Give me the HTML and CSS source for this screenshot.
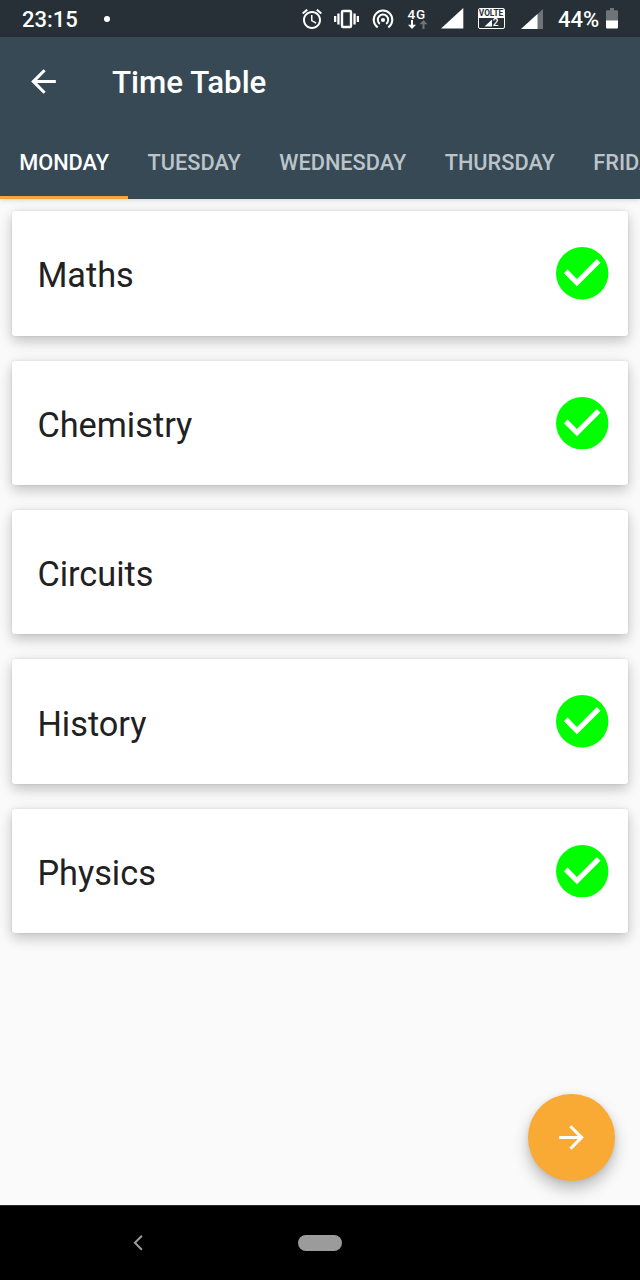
FILE: index.html
```html
<!DOCTYPE html>
<html lang="en">
<head>
<meta charset="utf-8">
<title>Time Table</title>
<link rel="stylesheet" href="styles.css">
</head>
<body>
<div class="screen">
  <div class="status">
    <span class="time">23:15</span>
    <span class="dot"></span>
    <div class="status-icons">
      <svg class="alarm" width="20" height="20" viewBox="2 2 20 20"><path fill="#fff" d="M22 5.720l-4.600-3.860-1.290 1.530 4.600 3.860L22 5.720zM7.880 3.390L6.600 1.860 2 5.710l1.290 1.530 4.590-3.850zM12.500 8H11v6l4.750 2.850.75-1.230-4-2.370V8zM12 4c-4.970 0-9 4.030-9 9s4.020 9 9 9c4.970 0 9-4.030 9-9s-4.030-9-9-9zm0 16c-3.870 0-7-3.130-7-7s3.130-7 7-7 7 3.130 7 7-3.130 7-7 7z"/></svg>
      <svg class="vibrate" width="25" height="20" viewBox="0 0 25 20"><path fill="#fff" d="M0 7h2.300v6H0zM3.300 4.500h2.300v11h-2.300zM19.400 4.500h2.300v11h-2.300zM22.700 7h2.300v6h-2.300z"/><rect x="8" y="2" width="9" height="16" fill="none" stroke="#fff" stroke-width="2.400" rx="1"/></svg>
      <svg class="hotspot" width="22" height="20" viewBox="0 0 22 20"><g fill="none" stroke="#fff" stroke-width="2"><path d="M5.700 18.400A9.300 9.300 0 1 1 16.300 18.400"/><path d="M7.900 14.900A5.200 5.200 0 1 1 14.100 14.900"/></g><circle cx="11" cy="11" r="2.100" fill="#fff"/></svg>
      <div class="network">
        <span>4G</span>
        <svg width="20" height="9" viewBox="0 0 20 9"><path fill="#fff" d="M3 0h2v4.800h3L4 9 0 4.800h3z"/><path fill="#6e7477" d="M14.500 9h2V4.200h3L15.500 0l-4 4.200h3z"/></svg>
      </div>
      <svg class="signal-one" width="23" height="21" viewBox="0 0 23 21"><path fill="#fff" d="M22.300 0v20.500H0z"/></svg>
      <div class="volte">
        <span class="volte-name">VOLTE</span>
        <span class="volte-sim"><svg width="8" height="8" viewBox="0 0 8 8"><path fill="#fff" d="M8 0.500v7H0.500z"/></svg>2</span>
      </div>
      <svg class="signal-two" width="22" height="20" viewBox="0 0 22 20"><path fill="#6e7477" d="M22 0v20H0z"/><path fill="#fff" d="M16.500 5v15H0z"/></svg>
      <span class="percent">44%</span>
      <svg class="battery" width="12" height="21" viewBox="0 0 12 21"><path fill="#6e7477" d="M4 0h4v2.200h3q1 0 1 1V13H0V3.200q0-1 1-1h3z"/><path fill="#fff" d="M0 12.500h12V19.500q0 1-1 1H1q-1 0-1-1z"/></svg>
    </div>
  </div>
  <header class="appbar">
    <div class="titlebar">
      <svg width="37" height="37" viewBox="0 0 24 24"><path fill="#fff" d="M20 11H7.830l5.590-5.590L12 4l-8 8 8 8 1.410-1.410L7.830 13H20v-2z"/></svg>
      <h1 class="title">Time Table</h1>
    </div>
    <nav class="tabs">
      <span class="tab active">MONDAY</span>
      <span class="tab">TUESDAY</span>
      <span class="tab">WEDNESDAY</span>
      <span class="tab">THURSDAY</span>
      <span class="tab">FRIDAY</span>
    </nav>
  </header>
  <main class="list">
    <div class="card"><span>Maths</span><svg class="check" viewBox="2 2 20 20"><circle cx="12" cy="12" r="10" fill="#0f0"/><path fill="#fff" d="M10 17l-5-5 1.410-1.410L10 14.170l7.590-7.590L19 8l-9 9z"/></svg></div>
    <div class="card"><span>Chemistry</span><svg class="check" viewBox="2 2 20 20"><circle cx="12" cy="12" r="10" fill="#0f0"/><path fill="#fff" d="M10 17l-5-5 1.410-1.410L10 14.170l7.590-7.590L19 8l-9 9z"/></svg></div>
    <div class="card"><span>Circuits</span></div>
    <div class="card"><span>History</span><svg class="check" viewBox="2 2 20 20"><circle cx="12" cy="12" r="10" fill="#0f0"/><path fill="#fff" d="M10 17l-5-5 1.410-1.410L10 14.170l7.590-7.590L19 8l-9 9z"/></svg></div>
    <div class="card"><span>Physics</span><svg class="check" viewBox="2 2 20 20"><circle cx="12" cy="12" r="10" fill="#0f0"/><path fill="#fff" d="M10 17l-5-5 1.410-1.410L10 14.170l7.590-7.590L19 8l-9 9z"/></svg></div>
    <div class="fab"><svg width="37" height="37" viewBox="0 0 24 24"><path fill="#fff" d="M12 4l-1.410 1.410L16.170 11H4v2h12.170l-5.580 5.590L12 20l8-8z"/></svg></div>
  </main>
  <footer class="navbar">
    <svg class="back" width="10" height="16" viewBox="0 0 10 16"><path fill="none" stroke="#9b9b9b" stroke-width="2" d="M8.900 0.800L1.900 7.800l7 7"/></svg>
    <span class="home"></span>
  </footer>
</div>
</body>
</html>
```
FILE: styles.css
```css
* { box-sizing: border-box; }
body { margin: 0; font-family: Roboto, "Liberation Sans", sans-serif; }
svg { display: block; flex: none; }
.screen { width: 640px; height: 1280px; display: flex; flex-direction: column; overflow: hidden; background: #fafafa; }

.status { height: 37px; flex: none; display: flex; align-items: center; background: #263036; color: #fff; padding: 0 22px; }
.time { width: 82px; font-size: 22px; font-weight: 500; line-height: 26px; padding-top: 3px; }
.dot { width: 6px; height: 6px; border-radius: 50%; background: #fff; }
.status-icons { flex: 1; display: flex; align-items: center; padding-left: 192px; }
.vibrate { margin-left: 12.5px; }
.hotspot { margin-left: 12.5px; }
.network { margin-left: 14px; width: 21px; flex: none; }
.network span { display: block; height: 12px; font-size: 13.5px; font-weight: 500; line-height: 12px; letter-spacing: 0.8px; }
.signal-one { margin-left: 12px; }
.volte { margin-left: 14px; width: 27px; height: 21px; flex: none; border: 1px solid #fff; border-radius: 2px; overflow: hidden; }
.volte-name { display: block; height: 9px; background: #fff; color: #263036; font-size: 8.3px; font-weight: 700; line-height: 9px; text-align: center; }
.volte-sim { display: flex; align-items: center; justify-content: center; gap: 1px; height: 10px; font-size: 10px; font-weight: 500; line-height: 10px; }
.signal-two { margin-left: 16px; }
.percent { margin-left: 15.5px; width: 41px; flex: none; font-size: 22px; font-weight: 500; line-height: 26px; padding-top: 3px; }
.battery { margin-left: 7px; }

.appbar { height: 162px; flex: none; background: #364955; color: #fff; position: relative; box-shadow: 0 1px 5px rgba(0, 0, 0, 0.16); }
.titlebar { height: 88px; display: flex; align-items: center; padding-left: 25px; }
.title { margin: 0 0 0 50px; padding-top: 4px; font-size: 31.3px; font-weight: 500; line-height: 38px; }
.tabs { height: 74px; display: flex; overflow: hidden; }
.tab { flex: none; height: 74px; padding: 0 19.2px; font-size: 21.75px; font-weight: 500; line-height: 75px; color: #bcc4c9; }
.active { color: #fff; border-bottom: 3px solid #f2a73a; }

.list { flex: 1; position: relative; display: flex; flex-direction: column; gap: 25px; padding: 12.300px 12px 0 12px; }
.card { height: 124.4px; flex: none; display: flex; align-items: center; justify-content: space-between; padding: 0 19.5px 0 25.4px; border-radius: 3px; background: #fff; color: #212121; font-size: 34.3px; line-height: 42px; box-shadow: 0 6px 13px rgba(0, 0, 0, 0.18), 0 1px 16px rgba(0, 0, 0, 0.06), 0 0 3px rgba(0, 0, 0, 0.09); }
.card span { padding-top: 4px; }
.check { width: 52.4px; height: 52.4px; }
.fab { position: absolute; right: 25px; bottom: 24.500px; width: 87px; height: 87px; border-radius: 50%; display: flex; align-items: center; justify-content: center; background: #f8aa35; box-shadow: 0 8px 15px rgba(0, 0, 0, 0.25), 0 1px 5px rgba(0, 0, 0, 0.08); }

.navbar { height: 75px; flex: none; display: flex; align-items: center; background: #000; border-top: 1px solid #292929; padding-left: 133px; }
.home { margin-left: 155px; width: 44px; height: 16px; border-radius: 8px; background: #9b9b9b; }
```
